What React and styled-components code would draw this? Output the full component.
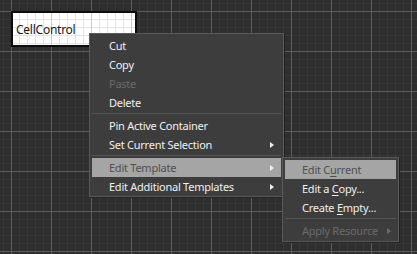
import React from 'react';
import styled, { createGlobalStyle } from 'styled-components';

const GlobalStyle = createGlobalStyle`
    html, body {
        margin: 0;
        padding: 0;
        background: #2e2e2e;
    }
`;

const Canvas = styled.div`
    position: relative;
    width: 417px;
    height: 254px;
    overflow: hidden;
    background-color: #2e2e2e;
    background-image:
        linear-gradient(to right, #5d5d5d 1px, transparent 1px),
        linear-gradient(to bottom, #5d5d5d 1px, transparent 1px),
        linear-gradient(to right, #383838 1px, transparent 1px),
        linear-gradient(to bottom, #383838 1px, transparent 1px);
    background-size: 40px 40px, 40px 40px, 8px 8px, 8px 8px;
    background-position: 11px 11px;
    font-family: "Noto Sans", "Open Sans", sans-serif;
    font-size: 11px;
    letter-spacing: -0.25px;
`;

// the selected element on the design surface
const ElementBox = styled.div`
    position: absolute;
    left: 11px;
    top: 11px;
    width: 126px;
    height: 36px;
    box-sizing: border-box;
    border: 2px solid #0c0c0c;
    display: flex;
    align-items: center;
    padding-left: 3px;
    color: #1a1a1a;
    font-size: 12px;
    background-color: #ffffff;
    background-image:
        linear-gradient(to right, #cdcdcd 1px, transparent 1px),
        linear-gradient(to right, #e4e4e4 1px, transparent 1px),
        linear-gradient(to bottom, #e4e4e4 1px, transparent 1px);
    background-size: 40px 40px, 8px 8px, 8px 8px;
    background-origin: border-box;
    background-position: 0 0;
`;

const Menu = styled.div`
    position: absolute;
    left: ${p => p.$x}px;
    top: ${p => p.$y}px;
    width: ${p => p.$w}px;
    box-sizing: border-box;
    padding: 2px 2px ${p => p.$pb}px 2px;
    background: #3d3d3d;
    border: 1px solid #5a5a5a;
    box-shadow: 1px 1px 0 #222;
    display: flex;
    flex-direction: column;
`;

const Item = styled.div`
    height: 19px;
    display: flex;
    align-items: center;
    padding: 0 7px 0 17px;
    color: ${p => p.$disabled ? '#6b6b6b' : p.$active ? '#505050' : '#f0f0f0'};
    background: ${p => p.$active ? '#a5a5a5' : 'transparent'};
    white-space: nowrap;
`;

const Label = styled.span`
    flex: ${p => p.$tight ? '0 0 auto' : '1'};
    line-height: 19px;
`;

const Key = styled.span`
    text-decoration: underline;
    text-underline-offset: 2px;
`;

const Arrow = styled.span`
    width: 0;
    height: 0;
    margin-left: ${p => p.$gap || 0}px;
    border-top: 3.5px solid transparent;
    border-bottom: 3.5px solid transparent;
    border-left: 4px solid ${p => p.$disabled ? '#6b6b6b' : '#eeeeee'};
`;

const Separator = styled.div`
    height: 1px;
    margin: 1px 0 2px 0;
    background: #555555;
`;

function MenuItem({ children, arrow, disabled, active }) {
    return (
        <Item $disabled={disabled} $active={active}>
            <Label>{children}</Label>
            {arrow && <Arrow $disabled={disabled} />}
        </Item>
    );
}

export default function App() {
    return (
        <>
            <GlobalStyle />
            <Canvas>
                <ElementBox>CellControl</ElementBox>

                <Menu $x={89} $y={33} $w={195} $pb={0}>
                    <MenuItem>Cut</MenuItem>
                    <MenuItem>Copy</MenuItem>
                    <MenuItem disabled>Paste</MenuItem>
                    <MenuItem>Delete</MenuItem>
                    <Separator />
                    <MenuItem>Pin Active Container</MenuItem>
                    <MenuItem arrow>Set Current Selection</MenuItem>
                    <Separator />
                    <MenuItem arrow active>Edit Template</MenuItem>
                    <MenuItem arrow>Edit Additional Templates</MenuItem>
                </Menu>

                <Menu $x={282} $y={157} $w={117} $pb={1}>
                    <MenuItem active>Edit C<Key>u</Key>rrent</MenuItem>
                    <MenuItem>Edit a <Key>C</Key>opy...</MenuItem>
                    <MenuItem>Create <Key>E</Key>mpty...</MenuItem>
                    <Separator />
                    <Item $disabled>
                        <Label $tight>Apply Resource</Label>
                        <Arrow $disabled $gap={9} />
                    </Item>
                </Menu>
            </Canvas>
        </>
    );
}
